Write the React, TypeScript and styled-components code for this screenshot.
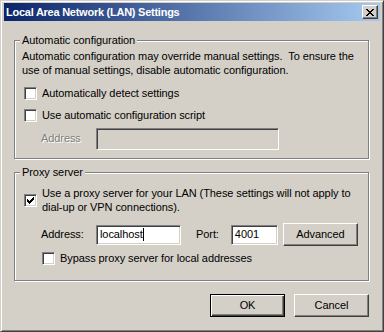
import React from "react";
import styled, { createGlobalStyle } from "styled-components";

//STYLES
const GlobalStyle = createGlobalStyle`
  html, body {
    margin: 0;
    padding: 0;
    background: #d4d0c8;
  }
  body {
    font-family: "Liberation Sans", Arial, sans-serif;
    font-size: 11px;
    line-height: 13px;
    letter-spacing: -0.08px;
    color: #000;
  }
`;

const Window = styled.div`
  width: 384px;
  height: 332px;
  box-sizing: border-box;
  display: flex;
  flex-direction: column;
  background: #d4d0c8;
  border: 1px solid;
  border-color: #d4d0c8 #404040 #404040 #d4d0c8;
  box-shadow: inset 1px 1px 0 #fff, inset -1px -1px 0 #808080;
  padding: 2px 3px 3px 3px;
`;

const TitleBar = styled.div`
  height: 18px;
  display: flex;
  align-items: center;
  justify-content: space-between;
  padding: 0 2px 0 2px;
  background: linear-gradient(to right, #0a246a, #a6caf0);
`;

const Title = styled.span`
  color: #fff;
  font-weight: bold;
  font-size: 11px;
  letter-spacing: -0.25px;
`;

const CloseButton = styled.div`
  width: 16px;
  height: 14px;
  box-sizing: border-box;
  display: flex;
  align-items: center;
  justify-content: center;
  background: #d4d0c8;
  border: 1px solid;
  border-color: #fff #404040 #404040 #fff;
  box-shadow: inset -1px -1px 0 #808080;
`;

const Body = styled.div`
  flex: 1;
  display: flex;
  flex-direction: column;
  padding: 13px 11px 0 10px;
`;

const Group = styled.fieldset<{ $top?: number; $bottom: number }>`
  margin: ${(p) => p.$top || 0}px 0 0 0;
  padding: 0 7px ${(p) => p.$bottom}px 7px;
  min-width: 0;
  border: 1px solid #808080;
  box-shadow: inset 1px 1px 0 #fff, 1px 1px 0 #fff;
`;

const Legend = styled.legend`
  padding: 0 2px;
  margin-left: -2px;
  line-height: 13px;
  background: #d4d0c8;
`;

const Description = styled.p`
  margin: 2px 0 0 0;
  line-height: 14px;
`;

const CheckRow = styled.label<{ $top: number; $indent?: number }>`
  display: flex;
  align-items: center;
  gap: 5px;
  margin-top: ${(p) => p.$top}px;
  padding-left: ${(p) => p.$indent || 2}px;
`;

const CheckLabel = styled.span`
  line-height: 14px;
`;

const Box = styled.span`
  flex: none;
  width: 13px;
  height: 13px;
  box-sizing: border-box;
  display: flex;
  align-items: center;
  justify-content: center;
  background: #fff;
  border: 1px solid;
  border-color: #808080 #fff #fff #808080;
  box-shadow: inset 1px 1px 0 #404040, inset -1px -1px 0 #d4d0c8;
`;

const FieldRow = styled.div<{ $top: number }>`
  display: flex;
  align-items: center;
  height: 23px;
  margin-top: ${(p) => p.$top}px;
  padding-left: 19px;
`;

const FieldLabel = styled.span<{ $width?: number; $disabled?: boolean; $gap?: number }>`
  width: ${(p) => (p.$width ? `${p.$width}px` : "auto")};
  margin-left: ${(p) => p.$gap || 0}px;
  margin-right: ${(p) => (p.$width ? 0 : 12)}px;
  color: ${(p) => (p.$disabled ? "#808080" : "#000")};
  text-shadow: ${(p) => (p.$disabled ? "1px 1px 0 #fff" : "none")};
`;

const Input = styled.div<{ $width: number; $height: number; $disabled?: boolean }>`
  width: ${(p) => p.$width}px;
  height: ${(p) => p.$height}px;
  box-sizing: border-box;
  display: flex;
  align-items: center;
  padding-left: 3px;
  background: ${(p) => (p.$disabled ? "#d4d0c8" : "#fff")};
  border: 1px solid;
  border-color: #808080 #fff #fff #808080;
  box-shadow: inset 1px 1px 0 #404040, inset -1px -1px 0 #d4d0c8;
`;

const Caret = styled.span`
  display: inline-block;
  width: 1px;
  height: 13px;
  background: #000;
`;

const Button = styled.button<{ $default?: boolean; $left?: number }>`
  width: 75px;
  height: 23px;
  margin-left: ${(p) => p.$left || 0}px;
  padding: 0;
  box-sizing: border-box;
  font: inherit;
  letter-spacing: inherit;
  color: #000;
  background: #d4d0c8;
  border: 1px solid;
  border-color: ${(p) =>
    p.$default ? "#000" : "#fff #404040 #404040 #fff"};
  box-shadow: ${(p) =>
    p.$default
      ? "inset 1px 1px 0 #fff, inset -1px -1px 0 #404040, inset -2px -2px 0 #808080"
      : "inset -1px -1px 0 #808080"};
`;

const Footer = styled.div`
  display: flex;
  justify-content: flex-end;
  gap: 9px;
  margin-top: 13px;
`;

const Check = () => (
  <svg width="7" height="7" viewBox="0 0 7 7" shapeRendering="crispEdges">
    <path
      d="M6 0h1v3h-1zM5 1h1v3h-1zM4 2h1v3h-1zM3 3h1v3h-1zM2 4h1v3h-1zM1 3h1v3h-1zM0 2h1v3h-1z"
      fill="#000"
    />
  </svg>
);

const CloseGlyph = () => (
  <svg width="8" height="7" viewBox="0 0 8 7" shapeRendering="crispEdges">
    <path
      d="M0 0h2v1h-2zM6 0h2v1h-2zM1 1h2v1h-2zM5 1h2v1h-2zM2 2h4v1h-4zM3 3h2v1h-2zM2 4h4v1h-4zM1 5h2v1h-2zM5 5h2v1h-2zM0 6h2v1h-2zM6 6h2v1h-2z"
      fill="#000"
    />
  </svg>
);

export default function App() {
  return (
    <>
      <GlobalStyle />
      <Window>
        <TitleBar>
          <Title>Local Area Network (LAN) Settings</Title>
          <CloseButton>
            <CloseGlyph />
          </CloseButton>
        </TitleBar>
        <Body>
          <Group $bottom={8}>
            <Legend>Automatic configuration</Legend>
            <Description>
              Automatic configuration may override manual settings.&nbsp; To ensure the
              <br />
              use of manual settings, disable automatic configuration.
            </Description>
            <CheckRow $top={9}>
              <Box />
              <CheckLabel>Automatically detect settings</CheckLabel>
            </CheckRow>
            <CheckRow $top={8}>
              <Box />
              <CheckLabel>Use automatic configuration script</CheckLabel>
            </CheckRow>
            <FieldRow $top={5}>
              <FieldLabel $width={55} $disabled>
                Address
              </FieldLabel>
              <Input $width={183} $height={22} $disabled />
            </FieldRow>
          </Group>

          <Group $top={7} $bottom={15}>
            <Legend>Proxy server</Legend>
            <CheckRow $top={7}>
              <Box>
                <Check />
              </Box>
              <CheckLabel>
                Use a proxy server for your LAN (These settings will not apply to
                <br />
                dial-up or VPN connections).
              </CheckLabel>
            </CheckRow>
            <FieldRow $top={9}>
              <FieldLabel $width={55}>Address:</FieldLabel>
              <Input $width={85} $height={20}>
                localhost
                <Caret />
              </Input>
              <FieldLabel $gap={15}>Port:</FieldLabel>
              <Input $width={47} $height={20}>
                4001
              </Input>
              <Button $left={5}>Advanced</Button>
            </FieldRow>
            <CheckRow $top={5} $indent={20}>
              <Box />
              <CheckLabel>Bypass proxy server for local addresses</CheckLabel>
            </CheckRow>
          </Group>

          <Footer>
            <Button $default>OK</Button>
            <Button>Cancel</Button>
          </Footer>
        </Body>
      </Window>
    </>
  );
}
